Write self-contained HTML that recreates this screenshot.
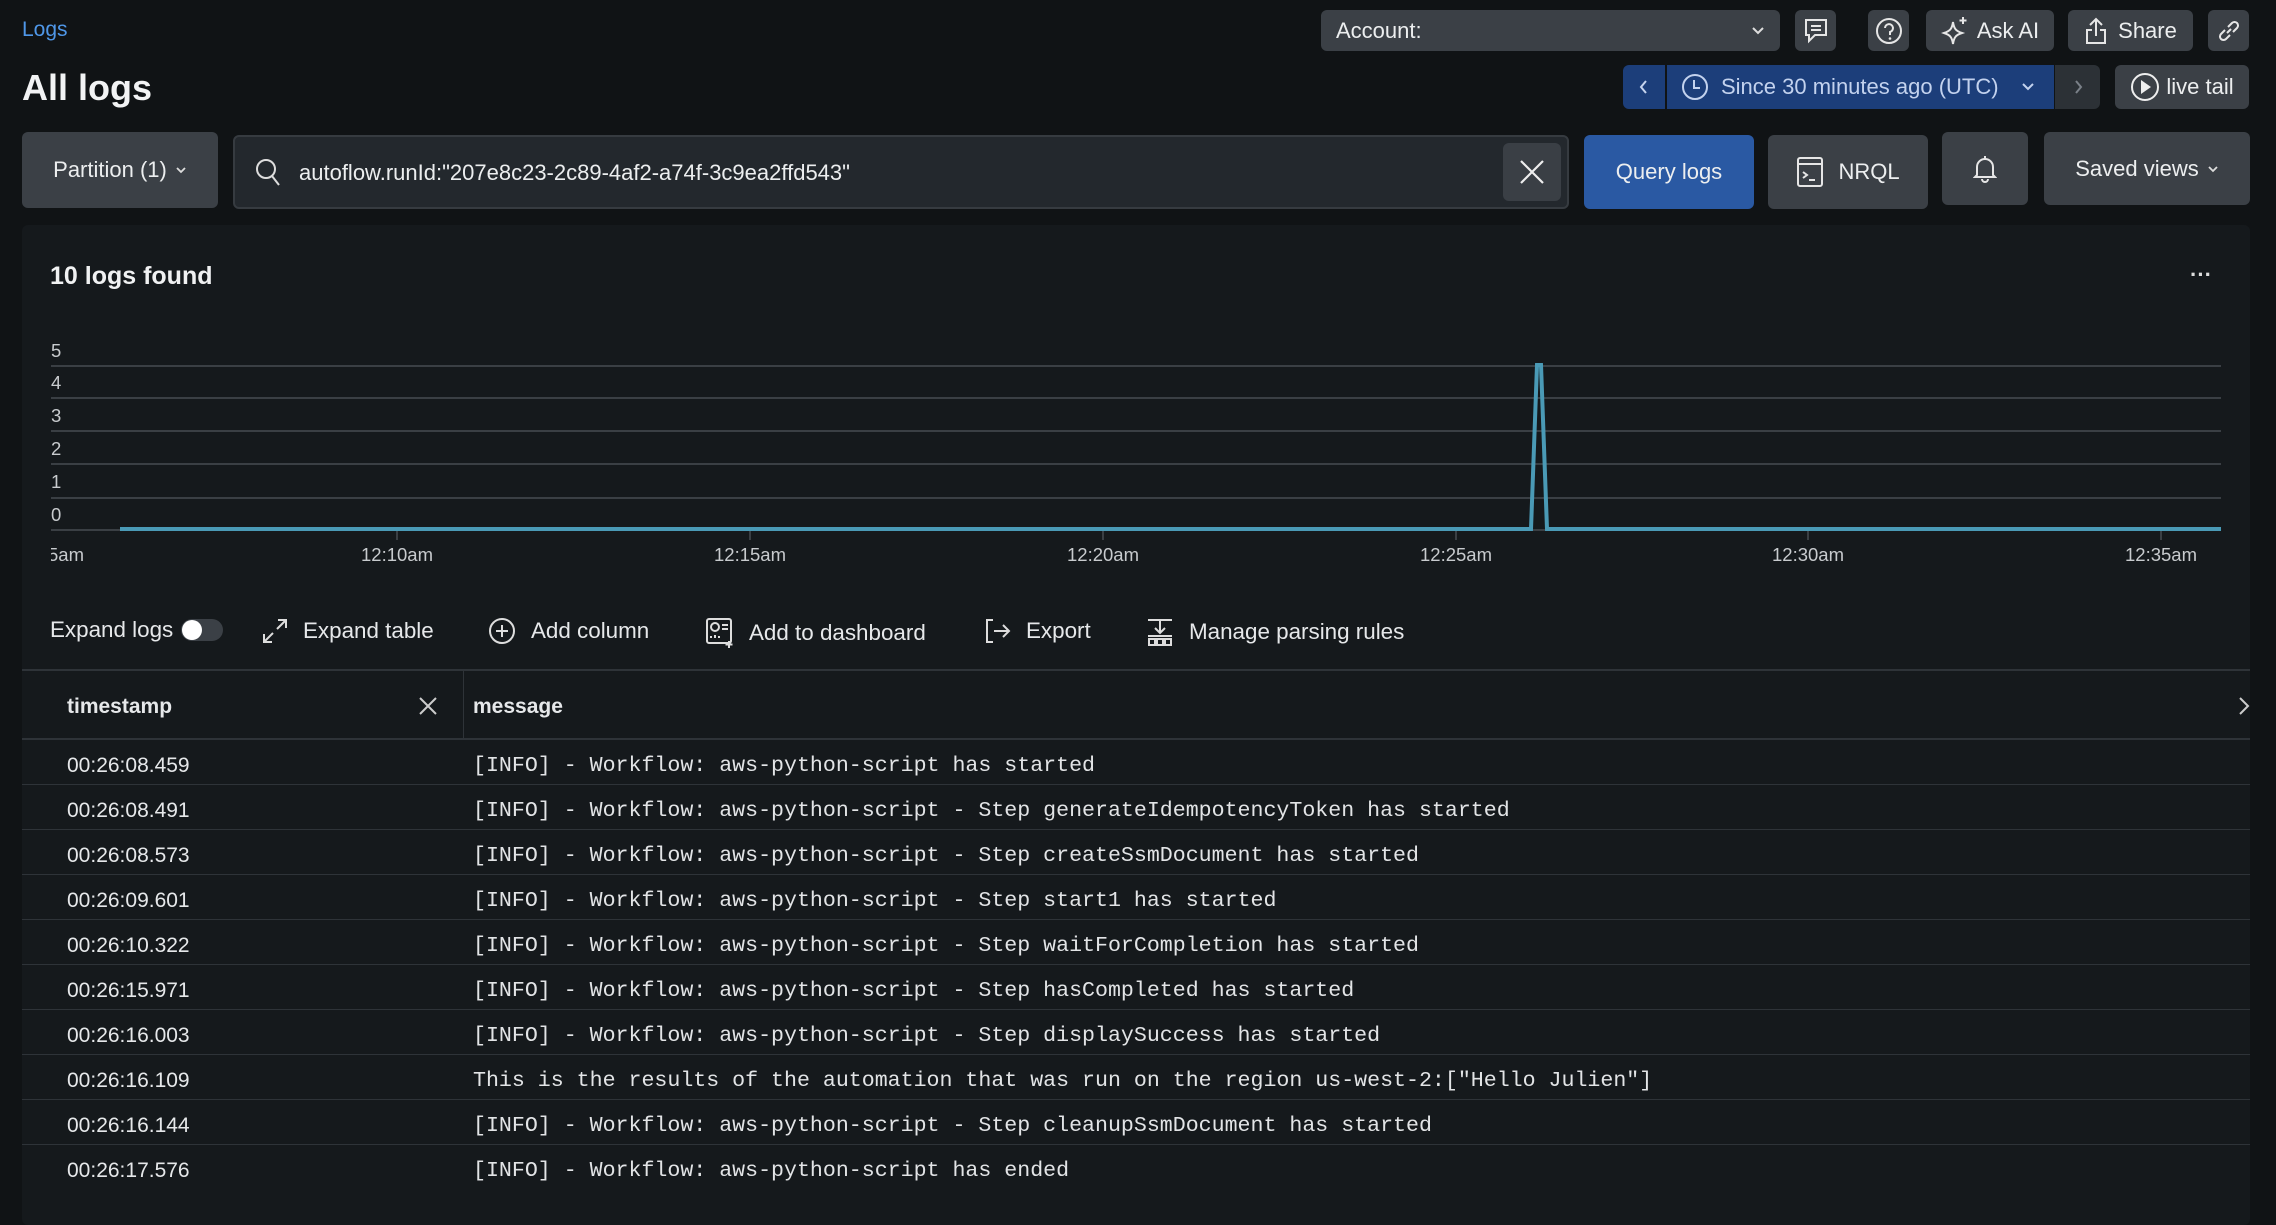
<!DOCTYPE html>
<html><head><meta charset="utf-8"><style>
*{box-sizing:border-box;margin:0;padding:0}
body{width:2276px;height:1218px;background:#101315;font-family:"Liberation Sans",sans-serif;color:#e6e8ea;position:relative;overflow:hidden}
.a{position:absolute}
.btn{position:absolute;background:#3b4046;border-radius:6px;display:flex;align-items:center;justify-content:center;color:#eceeef;font-size:22px}
svg{display:block}
.mono{font-family:"Liberation Mono",monospace}
.row{position:absolute;left:22px;width:2228px;height:45px;border-bottom:1px solid #2e3338;font-size:21px}
.row .t{position:absolute;left:45px;top:14px}
.row .m{position:absolute;left:451px;top:14px;font-family:"Liberation Mono",monospace;font-size:21.6px;color:#e2e4e6}
.tb{position:absolute;top:617px;font-size:22.4px;color:#e6e8ea;display:flex;align-items:center}
</style></head><body>
<div class="a" style="left:22px;top:18px;font-size:21px;color:#4f97e8">Logs</div>
<div class="a" style="left:22px;top:67px;font-size:36px;font-weight:bold;color:#f2f3f4">All logs</div>

<div class="btn" style="left:1321px;top:10px;width:459px;height:41px;justify-content:space-between;padding:0 15px">
<span style="font-size:22px">Account:</span>
<svg width="14" height="10" viewBox="0 0 14 10"><path d="M2 2l5 5 5-5" stroke="#ddd" stroke-width="2" fill="none"/></svg></div>
<div class="btn" style="left:1795px;top:10px;width:41px;height:41px"><svg width="26" height="28" viewBox="0 0 26 28"><path d="M3 3h20v15H12l-6 6v-6H3z" stroke="#e6e6e6" stroke-width="2" fill="none"/><path d="M8 9h10M8 13h10" stroke="#e6e6e6" stroke-width="2"/></svg></div>
<div class="btn" style="left:1868px;top:10px;width:41px;height:41px"><svg width="28" height="28" viewBox="0 0 28 28"><circle cx="14" cy="14" r="12" stroke="#e6e6e6" stroke-width="2" fill="none"/><path d="M10 11a4 4 0 1 1 5 4v3" stroke="#e6e6e6" stroke-width="2" fill="none"/><circle cx="15" cy="21.5" r="1.3" fill="#e6e6e6"/></svg></div>
<div class="btn" style="left:1926px;top:10px;width:128px;height:41px;gap:8px"><svg width="28" height="30" viewBox="0 0 28 30"><path d="M12 6c1 7 3 9 9 11-6 2-8 4-9 11-1-7-3-9-9-11 6-2 8-4 9-11z" stroke="#e6e6e6" stroke-width="2" fill="none"/><path d="M22 1v7M18.5 4.5h7" stroke="#e6e6e6" stroke-width="2"/></svg>Ask AI</div>
<div class="btn" style="left:2068px;top:10px;width:125px;height:41px;gap:10px"><svg width="24" height="30" viewBox="0 0 24 30"><path d="M12 20V3M6 9l6-6 6 6M8 14H3v13h18V14h-5" stroke="#e6e6e6" stroke-width="2" fill="none"/></svg>Share</div>
<div class="btn" style="left:2208px;top:10px;width:41px;height:41px"><svg width="26" height="26" viewBox="0 0 26 26"><path d="M11 15l4-4M9 12l-4 4a3.5 3.5 0 0 0 5 5l4-4M17 14l4-4a3.5 3.5 0 0 0-5-5l-4 4" stroke="#e6e6e6" stroke-width="2" fill="none"/></svg></div>

<div class="btn" style="left:1623px;top:65px;width:42px;height:44px;background:#1c3e7a;border-radius:6px 0 0 6px"><svg width="10" height="16" viewBox="0 0 10 16"><path d="M7 2L2 8l5 6" stroke="#c6d4ee" stroke-width="2" fill="none"/></svg></div>
<div class="btn" style="left:1667px;top:65px;width:387px;height:44px;background:#1c3e7a;border-radius:0;color:#c3d2ee;justify-content:flex-start;padding-left:14px;gap:12px"><svg width="28" height="28" viewBox="0 0 28 28"><circle cx="14" cy="14" r="12" stroke="#c3d2ee" stroke-width="2" fill="none"/><path d="M13 7v8h6" stroke="#c3d2ee" stroke-width="2" fill="none"/></svg><span>Since 30 minutes ago (UTC)</span><svg style="margin-left:10px" width="14" height="10" viewBox="0 0 14 10"><path d="M2 2l5 5 5-5" stroke="#c3d2ee" stroke-width="2" fill="none"/></svg></div>
<div class="btn" style="left:2055px;top:65px;width:45px;height:44px;background:#2c3136;border-radius:0 6px 6px 0"><svg width="10" height="16" viewBox="0 0 10 16"><path d="M3 2l5 6-5 6" stroke="#7a8088" stroke-width="2" fill="none"/></svg></div>
<div class="btn" style="left:2115px;top:65px;width:134px;height:44px;gap:6px"><svg width="30" height="30" viewBox="0 0 30 30"><circle cx="15" cy="15" r="13" stroke="#eee" stroke-width="2" fill="none"/><path d="M11 8v14l10-7z" fill="#eee"/></svg>live tail</div>

<div class="btn" style="left:22px;top:132px;width:196px;height:76px;gap:8px">Partition (1)<svg width="12" height="8" viewBox="0 0 12 8"><path d="M2 2l4 4 4-4" stroke="#ddd" stroke-width="1.8" fill="none"/></svg></div>
<div class="a" style="left:233px;top:135px;width:1336px;height:74px;background:#23282d;border:2px solid #363b40;border-radius:6px"></div>
<svg class="a" style="left:254px;top:157px" width="30" height="32" viewBox="0 0 30 32"><circle cx="12" cy="12" r="9" stroke="#ddd" stroke-width="2" fill="none"/><path d="M18 19l7 9" stroke="#ddd" stroke-width="2"/></svg>
<div class="a" style="left:299px;top:160px;font-size:22px;color:#eceeef">autoflow.runId:"207e8c23-2c89-4af2-a74f-3c9ea2ffd543"</div>
<div class="btn" style="left:1503px;top:143px;width:58px;height:58px;background:#3a3f45"><svg width="30" height="30" viewBox="0 0 30 30"><path d="M4 4l22 22M26 4L4 26" stroke="#eee" stroke-width="2.2"/></svg></div>
<div class="btn" style="left:1584px;top:135px;width:170px;height:74px;background:#2a59a3">Query logs</div>
<div class="btn" style="left:1768px;top:135px;width:160px;height:74px;gap:14px"><svg width="28" height="32" viewBox="0 0 28 32"><rect x="2" y="2" width="24" height="28" rx="2" stroke="#e6e6e6" stroke-width="2" fill="none"/><path d="M2 8h24M7 16l4 3-4 3M13 24h6" stroke="#e6e6e6" stroke-width="2" fill="none"/></svg>NRQL</div>
<div class="btn" style="left:1942px;top:132px;width:86px;height:73px"><svg width="24" height="30" viewBox="0 0 24 30"><path d="M4 21V13a8 8 0 0 1 16 0v8l2 2H2z M12 2v3 M9 25a3 3 0 0 0 6 0" stroke="#e6e6e6" stroke-width="2" fill="none"/></svg></div>
<div class="btn" style="left:2044px;top:132px;width:206px;height:73px;gap:8px">Saved views<svg width="12" height="8" viewBox="0 0 12 8"><path d="M2 2l4 4 4-4" stroke="#ddd" stroke-width="1.8" fill="none"/></svg></div>

<div class="a" style="left:22px;top:225px;width:2228px;height:1000px;background:#15191c;border-radius:6px"></div>
<div class="a" style="left:50px;top:262px;font-size:25px;font-weight:bold;color:#f0f1f2">10 logs found</div>
<div class="a" style="left:2190px;top:262px;font-size:22px;font-weight:bold;color:#ddd">···</div>

<svg class="a" style="left:0;top:330px" width="2276" height="240">
<g stroke="#3a3f44" stroke-width="2">
<line x1="51" y1="36" x2="2221" y2="36"/><line x1="51" y1="68" x2="2221" y2="68"/><line x1="51" y1="101" x2="2221" y2="101"/><line x1="51" y1="134" x2="2221" y2="134"/><line x1="51" y1="168" x2="2221" y2="168"/><line x1="51" y1="200" x2="2221" y2="200"/>
<line x1="397" y1="200" x2="397" y2="210"/><line x1="750" y1="200" x2="750" y2="210"/><line x1="1103" y1="200" x2="1103" y2="210"/><line x1="1456" y1="200" x2="1456" y2="210"/><line x1="1808" y1="200" x2="1808" y2="210"/><line x1="2161" y1="200" x2="2161" y2="210"/>
</g>
<g font-family="Liberation Sans" font-size="18.5" fill="#c8cbce">
<text x="51" y="27">5</text><text x="51" y="59">4</text><text x="51" y="92">3</text><text x="51" y="125">2</text><text x="51" y="158">1</text><text x="51" y="191">0</text>
<text x="48" y="231">5am</text>
<text x="397" y="231" text-anchor="middle">12:10am</text><text x="750" y="231" text-anchor="middle">12:15am</text><text x="1103" y="231" text-anchor="middle">12:20am</text><text x="1456" y="231" text-anchor="middle">12:25am</text><text x="1808" y="231" text-anchor="middle">12:30am</text><text x="2161" y="231" text-anchor="middle">12:35am</text>
</g>
<rect x="40" y="215" width="11" height="22" fill="#15191c"/>
<path d="M120 199H1531L1537 35H1541L1547 199H2221" stroke="#4a9ab6" stroke-width="4" fill="none"/>
</svg>

<div class="tb" style="left:50px">Expand logs<span style="display:inline-block;margin-left:8px;width:42px;height:22px;border-radius:11px;background:#3b4046;position:relative"><span style="position:absolute;left:1px;top:1px;width:20px;height:20px;border-radius:10px;background:#fff"></span></span></div>
<div class="tb" style="left:261px"><svg width="28" height="28" viewBox="0 0 28 28"><path d="M3 25l9-9M3 17v8h8M25 3l-9 9M17 3h8v8" stroke="#ddd" stroke-width="2" fill="none"/></svg><span style="margin-left:14px">Expand table</span></div>
<div class="tb" style="left:488px"><svg width="28" height="28" viewBox="0 0 28 28"><circle cx="14" cy="14" r="12" stroke="#ddd" stroke-width="2" fill="none"/><path d="M14 8v12M8 14h12" stroke="#ddd" stroke-width="2"/></svg><span style="margin-left:15px">Add column</span></div>
<div class="tb" style="left:705px"><svg width="30" height="32" viewBox="0 0 30 32"><rect x="2" y="2" width="24" height="24" rx="2" stroke="#ddd" stroke-width="2" fill="none"/><circle cx="10" cy="10" r="4" stroke="#ddd" stroke-width="2" fill="none"/><path d="M17 8h6M17 12h6M6 21v-2M10 21v-3M14 21v-2M24 24v7M20.5 27.5h7" stroke="#ddd" stroke-width="2"/></svg><span style="margin-left:14px">Add to dashboard</span></div>
<div class="tb" style="left:984px"><svg width="28" height="28" viewBox="0 0 28 28"><path d="M9 3H3v22h6M10 14h15M19 8l6 6-6 6" stroke="#ddd" stroke-width="2" fill="none"/></svg><span style="margin-left:14px">Export</span></div>
<div class="tb" style="left:1146px"><svg width="28" height="30" viewBox="0 0 28 30"><path d="M2 3h24M14 3v12M9 11l5 5 5-5M2 19h24" stroke="#ddd" stroke-width="2" fill="none"/><rect x="3" y="22" width="6" height="6" stroke="#ddd" stroke-width="2" fill="none"/><rect x="11" y="22" width="6" height="6" stroke="#ddd" stroke-width="2" fill="none"/><rect x="19" y="22" width="6" height="6" stroke="#ddd" stroke-width="2" fill="none"/></svg><span style="margin-left:15px">Manage parsing rules</span></div>

<div class="a" style="left:22px;top:669px;width:2228px;height:2px;background:#2e3338"></div>
<div class="a" style="left:463px;top:670px;width:1px;height:69px;background:#2e3338"></div>
<div class="a" style="left:67px;top:695px;font-size:21px;font-weight:bold;color:#e6e8ea">timestamp</div>
<svg class="a" style="left:418px;top:696px" width="20" height="20" viewBox="0 0 20 20"><path d="M2 2l16 16M18 2L2 18" stroke="#ccc" stroke-width="2"/></svg>
<div class="a" style="left:473px;top:695px;font-size:21px;font-weight:bold;color:#e6e8ea">message</div>
<svg class="a" style="left:2238px;top:696px" width="12" height="20" viewBox="0 0 12 20"><path d="M2 2l8 8-8 8" stroke="#ccc" stroke-width="2" fill="none"/></svg>
<div class="a" style="left:22px;top:738px;width:2228px;height:2px;background:#2e3338"></div>

<div class="row" style="top:740px"><span class="t">00:26:08.459</span><span class="m">[INFO] - Workflow: aws-python-script has started</span></div>
<div class="row" style="top:785px"><span class="t">00:26:08.491</span><span class="m">[INFO] - Workflow: aws-python-script - Step generateIdempotencyToken has started</span></div>
<div class="row" style="top:830px"><span class="t">00:26:08.573</span><span class="m">[INFO] - Workflow: aws-python-script - Step createSsmDocument has started</span></div>
<div class="row" style="top:875px"><span class="t">00:26:09.601</span><span class="m">[INFO] - Workflow: aws-python-script - Step start1 has started</span></div>
<div class="row" style="top:920px"><span class="t">00:26:10.322</span><span class="m">[INFO] - Workflow: aws-python-script - Step waitForCompletion has started</span></div>
<div class="row" style="top:965px"><span class="t">00:26:15.971</span><span class="m">[INFO] - Workflow: aws-python-script - Step hasCompleted has started</span></div>
<div class="row" style="top:1010px"><span class="t">00:26:16.003</span><span class="m">[INFO] - Workflow: aws-python-script - Step displaySuccess has started</span></div>
<div class="row" style="top:1055px"><span class="t">00:26:16.109</span><span class="m">This is the results of the automation that was run on the region us-west-2:["Hello Julien"]</span></div>
<div class="row" style="top:1100px"><span class="t">00:26:16.144</span><span class="m">[INFO] - Workflow: aws-python-script - Step cleanupSsmDocument has started</span></div>
<div class="row" style="top:1145px;border-bottom:none"><span class="t">00:26:17.576</span><span class="m">[INFO] - Workflow: aws-python-script has ended</span></div>
</body></html>
